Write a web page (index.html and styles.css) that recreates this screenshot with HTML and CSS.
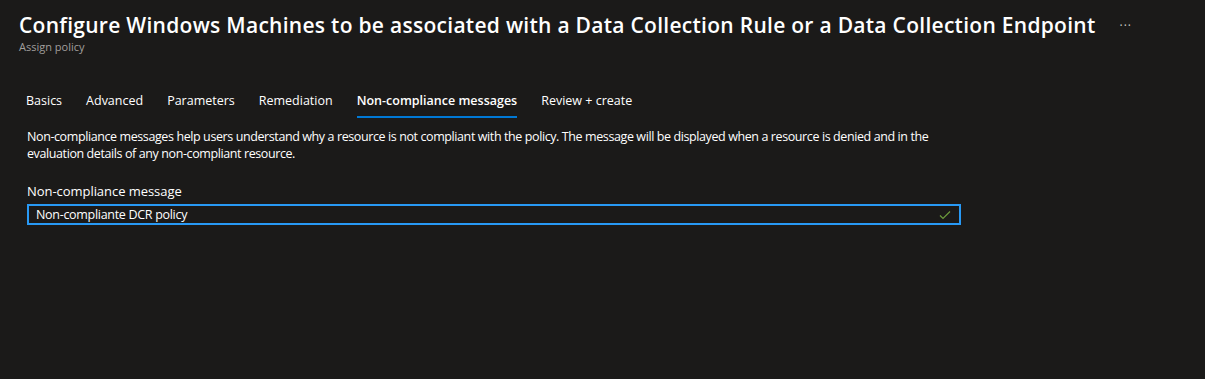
FILE: index.html
```html
<!DOCTYPE html>
<html>
<head>
    <meta charset="utf-8" />
    <title>Assign policy</title>
    <link rel="stylesheet" href="styles.css">
</head>
<body>
    <div class="blade">
        <div class="blade-header">
            <div class="title-row">
                <h1>Configure Windows Machines to be associated with a Data Collection Rule or a Data Collection Endpoint</h1>
                <span class="more">&middot;&middot;&middot;</span>
            </div>
            <div class="subtitle">Assign policy</div>
        </div>
        <div class="tabs">
            <a class="tab">Basics</a>
            <a class="tab">Advanced</a>
            <a class="tab">Parameters</a>
            <a class="tab">Remediation</a>
            <a class="tab active">Non-compliance messages</a>
            <a class="tab">Review + create</a>
        </div>
        <div class="content">
            <p class="intro">Non-compliance messages help users understand why a resource is not compliant with the policy. The message will be displayed when a resource is denied and in the evaluation details of any non-compliant resource.</p>
            <label class="field-label" for="msg">Non-compliance message</label>
            <div class="input-box">
                <input id="msg" type="text" value="Non-compliante DCR policy" />
                <svg class="check" width="12" height="10" viewBox="0 0 12 10">
                    <path d="M1 5.5 L4 8.5 L11 1.5" fill="none" stroke="#6c9a3c" stroke-width="1.2"/>
                </svg>
            </div>
        </div>
    </div>
</body>
</html>
```

FILE: styles.css
```css
body {
    margin: 0;
    background-color: #1b1a19;
    color: #ffffff;
    font-family: 'Open Sans', 'Noto Sans', sans-serif;
    font-size: 13px;
    height: 379px;
    overflow: hidden;
}

.blade-header {
    padding: 10px 0 0 19px;
}

.title-row {
    display: flex;
    align-items: center;
    gap: 24px;
}

.title-row h1 {
    margin: 0;
    font-size: 21px;
    font-weight: 600;
    line-height: 30px;
    letter-spacing: 0.28px;
    white-space: nowrap;
}

.more {
    color: #c8c6c4;
    font-size: 12px;
    letter-spacing: 1px;
}

.subtitle {
    color: #a19f9d;
    font-size: 11px;
    margin-top: 0;
    line-height: 14px;
}

.tabs {
    display: flex;
    gap: 24px;
    padding: 0 0 0 26px;
    margin-top: 38px;
}

.tab {
    color: #ffffff;
    font-size: 12.5px;
    padding-bottom: 6px;
    border-bottom: 2px solid transparent;
    line-height: 18px;
}

.tab.active {
    font-weight: 600;
    border-bottom-color: #0078d4;
}

.content {
    padding: 10px 0 0 27px;
}

.intro {
    margin: 0;
    width: 910px;
    font-size: 12.5px;
    letter-spacing: -0.4px;
    line-height: 17px;
}

.field-label {
    display: block;
    margin-top: 21px;
    font-size: 13px;
    letter-spacing: -0.05px;
    line-height: 17px;
}

.input-box {
    display: flex;
    align-items: center;
    width: 915px;
    height: 17px;
    margin-top: 4px;
    border: 2px solid #2899f5;
    padding: 0 8px 0 7px;
    box-sizing: content-box;
}

.input-box input {
    flex: 1;
    background: transparent;
    border: none;
    outline: none;
    color: #ffffff;
    font-family: inherit;
    font-size: 12.5px;
    letter-spacing: -0.3px;
    padding: 0;
}

.check {
    display: block;
}
```
